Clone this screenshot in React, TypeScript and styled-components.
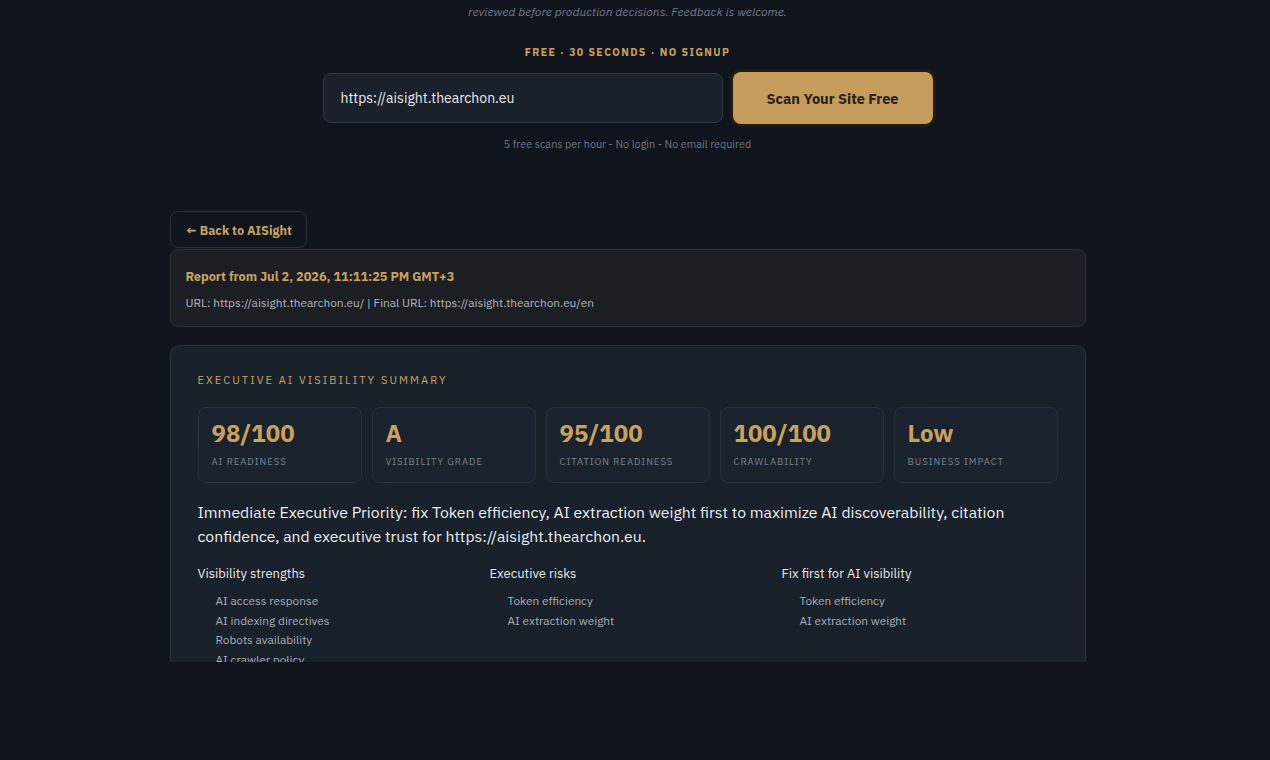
import styled, { createGlobalStyle } from 'styled-components';

const GlobalStyle = createGlobalStyle`
    * {
        box-sizing: border-box;
    }
    body {
        margin: 0;
        background: #10151d;
        font-family: 'IBM Plex Sans', 'Noto Sans', Inter, sans-serif;
        color: #e6e8eb;
    }
`;

const gold = '#c9a15f';

// the reference keeps a 15px scrollbar gutter on the right
const Page = styled.div`
    width: 1255px;
    height: 760px;
    overflow: hidden;
    background: #10151d;
`;

const Viewport = styled.div`
    height: 662px;
    overflow: hidden;
`;

const Hero = styled.section`
    display: flex;
    flex-direction: column;
    align-items: center;
    padding-top: 3px;
`;

const Disclaimer = styled.p`
    margin: 0;
    font-size: 12px;
    font-style: italic;
    color: #727a86;
    line-height: 18px;
`;

const Kicker = styled.div`
    margin-top: 24px;
    font-size: 10.5px;
    font-weight: 700;
    letter-spacing: 1.4px;
    color: ${gold};
`;

const ScanForm = styled.form`
    display: flex;
    gap: 10px;
    margin-top: 14px;
`;

const UrlInput = styled.input`
    width: 400px;
    height: 50px;
    padding: 0 17px;
    border-radius: 8px;
    border: 1px solid #2f3845;
    background: #1a212b;
    color: #e8eaed;
    font-family: inherit;
    font-size: 14px;
    outline: none;
`;

const ScanButton = styled.button`
    width: 200px;
    height: 52px;
    margin-top: -1px;
    border: none;
    border-radius: 8px;
    background: #c69c5d;
    color: #2a2218;
    font-family: inherit;
    font-size: 14.5px;
    font-weight: 700;
    box-shadow: 0 0 0 3px #1f1c18;
    cursor: pointer;
`;

const FinePrint = styled.div`
    margin-top: 13px;
    font-size: 10.8px;
    color: #6f7784;
`;

const Report = styled.main`
    width: 916px;
    margin: 60px auto 0;
    display: flex;
    flex-direction: column;
`;

const BackLink = styled.a`
    align-self: flex-start;
    display: flex;
    align-items: center;
    height: 37px;
    padding: 0 14px 0 15px;
    border: 1px solid #2a323e;
    border-radius: 8px;
    color: ${gold};
    font-size: 12.6px;
    font-weight: 700;
    text-decoration: none;
`;

const MetaBox = styled.div`
    margin-top: 1px;
    padding: 18px 15px 16px;
    border: 1px solid #2e333a;
    border-radius: 8px;
    background: #1b1e23;
`;

const MetaTitle = styled.div`
    font-size: 12.7px;
    font-weight: 700;
    color: ${gold};
`;

const MetaUrl = styled.div`
    margin-top: 11px;
    font-size: 11.8px;
    color: #b3b8bf;
`;

const SummaryCard = styled.section`
    margin-top: 18px;
    padding: 27px 27px 40px;
    border: 1px solid #2a323d;
    border-radius: 10px;
    background: linear-gradient(160deg, #19212b 0%, #18202a 60%, #1a212b 100%);
`;

const SectionLabel = styled.div`
    font-size: 11px;
    letter-spacing: 2.1px;
    color: ${gold};
`;

const MetricGrid = styled.div`
    display: grid;
    grid-template-columns: repeat(5, 1fr);
    gap: 10px;
    margin-top: 20px;
`;

const Metric = styled.div`
    height: 76px;
    padding: 11px 13px 0;
    border: 1px solid #29313c;
    border-radius: 8px;
    background: #1a222d;
`;

const MetricValue = styled.div`
    font-size: 24px;
    font-weight: 700;
    color: ${gold};
    line-height: 28px;
`;

const MetricLabel = styled.div`
    margin-top: 8px;
    font-size: 9.5px;
    letter-spacing: 1px;
    color: #7c8491;
`;

const Priority = styled.p`
    margin: 17px 0 0;
    font-size: 15.8px;
    line-height: 24px;
    color: #eceef1;
`;

const Columns = styled.div`
    display: grid;
    grid-template-columns: repeat(3, 1fr);
    gap: 16px;
    margin-top: 17px;
`;

const ColumnTitle = styled.div`
    font-size: 13px;
    color: #e6e8eb;
`;

const ItemList = styled.ul`
    margin: 9px 0 0;
    padding-left: 18px;
    list-style: none;
`;

const Item = styled.li`
    font-size: 11.8px;
    line-height: 19.7px;
    color: #a9afb8;
`;

const metrics = [
    { value: '98/100', label: 'AI READINESS' },
    { value: 'A', label: 'VISIBILITY GRADE' },
    { value: '95/100', label: 'CITATION READINESS' },
    { value: '100/100', label: 'CRAWLABILITY' },
    { value: 'Low', label: 'BUSINESS IMPACT' },
];

const columns = [
    {
        title: 'Visibility strengths',
        items: ['AI access response', 'AI indexing directives', 'Robots availability', 'AI crawler policy'],
    },
    { title: 'Executive risks', items: ['Token efficiency', 'AI extraction weight'] },
    { title: 'Fix first for AI visibility', items: ['Token efficiency', 'AI extraction weight'] },
];

const App = () => {
    return (
        <>
            <GlobalStyle />
            <Page>
                <Viewport>
                    <Hero>
                        <Disclaimer>reviewed before production decisions. Feedback is welcome.</Disclaimer>
                        <Kicker>FREE · 30 SECONDS · NO SIGNUP</Kicker>
                        <ScanForm onSubmit={(e) => e.preventDefault()}>
                            <UrlInput defaultValue="https://aisight.thearchon.eu" />
                            <ScanButton type="submit">Scan Your Site Free</ScanButton>
                        </ScanForm>
                        <FinePrint>5 free scans per hour - No login - No email required</FinePrint>
                    </Hero>
                    <Report>
                        <BackLink href="#">← Back to AISight</BackLink>
                        <MetaBox>
                            <MetaTitle>Report from Jul 2, 2026, 11:11:25 PM GMT+3</MetaTitle>
                            <MetaUrl>
                                URL: https://aisight.thearchon.eu/ | Final URL: https://aisight.thearchon.eu/en
                            </MetaUrl>
                        </MetaBox>
                        <SummaryCard>
                            <SectionLabel>EXECUTIVE AI VISIBILITY SUMMARY</SectionLabel>
                            <MetricGrid>
                                {metrics.map((m) => (
                                    <Metric key={m.label}>
                                        <MetricValue>{m.value}</MetricValue>
                                        <MetricLabel>{m.label}</MetricLabel>
                                    </Metric>
                                ))}
                            </MetricGrid>
                            <Priority>
                                Immediate Executive Priority: fix Token efficiency, AI extraction weight first to
                                maximize AI discoverability, citation confidence, and executive trust for
                                https://aisight.thearchon.eu.
                            </Priority>
                            <Columns>
                                {columns.map((col) => (
                                    <div key={col.title}>
                                        <ColumnTitle>{col.title}</ColumnTitle>
                                        <ItemList>
                                            {col.items.map((item) => (
                                                <Item key={item}>{item}</Item>
                                            ))}
                                        </ItemList>
                                    </div>
                                ))}
                            </Columns>
                        </SummaryCard>
                    </Report>
                </Viewport>
            </Page>
        </>
    );
};

export default App;
